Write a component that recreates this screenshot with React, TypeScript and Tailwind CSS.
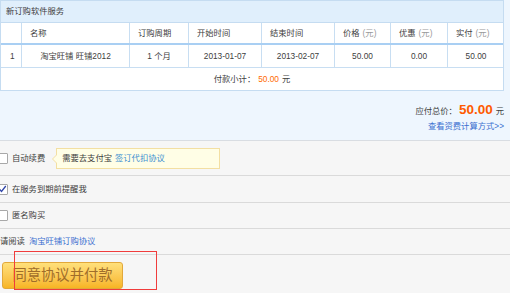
import React from "react";

const cols = [21, 108, 59, 73, 73, 56, 57, 56];
const font = { fontFamily: '"Liberation Sans", "Noto Sans CJK SC", sans-serif' };

function Cell({ w, last, children, className = "" }: { w: number; last?: boolean; children?: React.ReactNode; className?: string }) {
  return (
    <div
      style={{ width: w }}
      className={`shrink-0 h-full flex items-center ${last ? "" : "border-r border-[#c8def2]"} ${className}`}
    >
      {children}
    </div>
  );
}

export default function App() {
  const heads: React.ReactNode[] = [
    "",
    "名称",
    "订购周期",
    "开始时间",
    "结束时间",
    <>价格<span className="text-[#999] ml-[3px]">(元)</span></>,
    <>优惠<span className="text-[#999] ml-[3px]">(元)</span></>,
    <>实付<span className="text-[#999] ml-[3px]">(元)</span></>,
  ];
  const data = ["1", "淘宝旺铺 旺铺2012", "1 个月", "2013-01-07", "2013-02-07", "50.00", "0.00", "50.00"];
  return (
    <div style={font} className="relative w-[510px] h-[293px] overflow-hidden bg-[#f6f6f6] text-[8.3px] text-[#404040] leading-none">
      <div className="bg-[#eef6fe] h-[141px] border-b border-[#d9dde2]">
        <div className="w-[504px] border border-[#c5dcf1] bg-white">
          <div className="h-[22px] bg-[#e0effc] border-b border-[#c5dcf1] flex items-center pl-[5px]">新订购软件服务</div>
          <div className="h-[22px] flex border-b-2 border-[#a9cff3]">
            {cols.map((w, i) => (
              <Cell key={i} w={w} last={i === cols.length - 1} className="pl-[8px]">
                {heads[i]}
              </Cell>
            ))}
          </div>
          <div className="h-[23px] flex border-b border-[#c8def2]">
            {cols.map((w, i) => (
              <Cell key={i} w={w} last={i === cols.length - 1} className={i === 0 ? "pl-[9px]" : "justify-center"}>
                {data[i]}
              </Cell>
            ))}
          </div>
          <div className="h-[22px] flex items-center justify-center">
            付款小计：<span className="text-[#ff6a00] ml-[3px] mr-[3px]">50.00</span>元
          </div>
        </div>
        <div className="w-[504px] flex flex-col items-end pt-[12px]">
          <div className="flex items-baseline">
            <span>应付总价：</span>
            <span className="text-[#ff5a00] font-bold text-[13.5px] ml-[2px] mr-[3px]">50.00</span>
            <span>元</span>
          </div>
          <div className="mt-[5px] text-[#3a6fd0]">查看资费计算方式&gt;&gt;</div>
        </div>
      </div>

      <div className="h-[35px] border-b border-[#dadada] flex items-center">
        <span className="ml-[-4px] w-[12px] h-[11px] border border-[#a8a8a8] bg-white rounded-[1px]" />
        <span className="ml-[4px]">自动续费</span>
        <div className="relative ml-[11px] h-[21px] w-[164px] bg-[#fffee6] border border-[#f3dfa2] flex items-center pl-[5px]">
          <span className="absolute left-[-5px] top-[5px] w-0 h-0 border-y-[5px] border-y-transparent border-r-[5px] border-r-[#f3dfa2]" />
          <span className="absolute left-[-4px] top-[5px] w-0 h-0 border-y-[5px] border-y-transparent border-r-[5px] border-r-[#fffee6]" />
          需要去支付宝 <span className="text-[#3b8fd1] ml-[3px]">签订代扣协议</span>
        </div>
      </div>
      <div className="h-[27px] border-b border-[#dadada] flex items-center">
        <span className="ml-[-4px] w-[12px] h-[11px] border border-[#a8a8a8] bg-white rounded-[1px] flex items-center justify-center">
          <svg width="9" height="8" viewBox="0 0 9 8"><path d="M1.5 4.2 L3.5 6.4 L7.8 1" fill="none" stroke="#3045a8" strokeWidth="1.3" /></svg>
        </span>
        <span className="ml-[4px]">在服务到期前提醒我</span>
      </div>
      <div className="h-[26px] border-b border-[#dadada] flex items-center">
        <span className="ml-[-4px] w-[12px] h-[11px] border border-[#a8a8a8] bg-white rounded-[1px]" />
        <span className="ml-[4px]">匿名购买</span>
      </div>
      <div className="h-[26px] border-b border-[#dadada] flex items-center">
        <span>请阅读</span>
        <span className="ml-[4px] text-[#3a6fd0]">淘宝旺铺订购协议</span>
      </div>
      <div className="pt-[7px] pl-[2px]">
        <button className="w-[121px] h-[27px] rounded-[3px] border border-[#e2a83a] bg-gradient-to-b from-[#ffe07a] to-[#f7b521] text-[#a06d2a] text-[14.3px] flex items-center justify-center">
          同意协议并付款
        </button>
      </div>
      <div className="absolute left-[14px] top-[251px] w-[143px] h-[39px] border border-[#f03c3c]" />
    </div>
  );
}
